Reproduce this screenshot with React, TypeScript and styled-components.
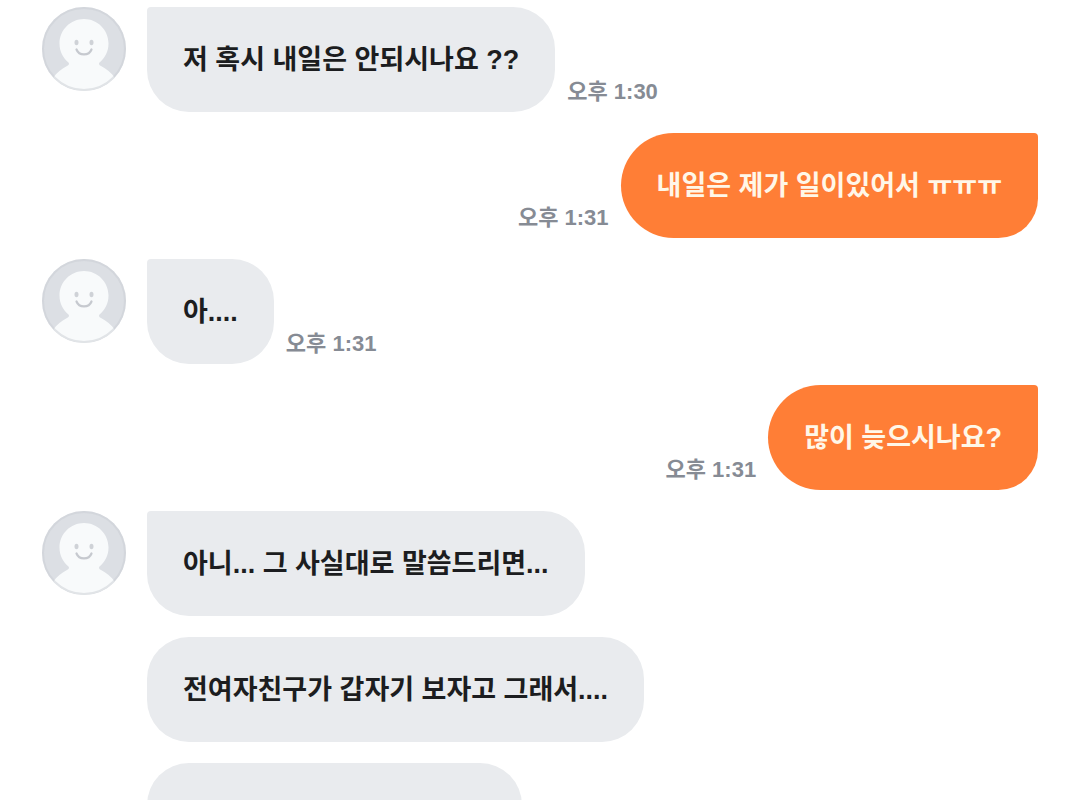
import React from "react";
import styled, { createGlobalStyle, css } from "styled-components";

const GlobalStyle = createGlobalStyle`
  *, *::before, *::after {
    box-sizing: border-box;
  }
  html {
    scrollbar-width: none;
  }
  body {
    margin: 0;
    background: #ffffff;
    font-family: "Liberation Sans", "Noto Sans CJK KR", sans-serif;
  }
`;

type Side = "received" | "sent";

const Conversation = styled.main`
  min-height: 100vh;
  padding: 7px 42px 20px;
`;

const MessageList = styled.ol`
  display: flex;
  flex-direction: column;
  gap: 21px;
  margin: 0;
  padding: 0;
  list-style: none;
`;

const MessageRow = styled.li<{ $side: Side }>`
  display: flex;
  flex-direction: ${({ $side }) => ($side === "sent" ? "row-reverse" : "row")};
  align-items: flex-start;
`;

const AvatarSlot = styled.div`
  flex: none;
  width: 84px;
  margin-right: 21px;
`;

const AvatarImage = styled.svg`
  display: block;
  width: 84px;
  height: 84px;
`;

const receivedBubble = css<{ $first: boolean }>`
  border-radius: ${({ $first }) => ($first ? "4px" : "42px")} 42px 42px 42px;
  background: #e9ebee;
  color: #1c1d20;
`;

const sentBubble = css`
  border-radius: 53px 4px 40px 53px;
  background: #ff7e36;
  color: #fff7e8;
`;

const Bubble = styled.p<{ $side: Side; $first: boolean }>`
  margin: 0;
  padding: 33px 36px 32px;
  font-size: 27px;
  font-weight: 700;
  line-height: 40px;
  ${({ $side }) => ($side === "sent" ? sentBubble : receivedBubble)}
`;

const Time = styled.time`
  flex: none;
  align-self: flex-end;
  margin: 0 12px;
  padding-bottom: 4px;
  color: #868b94;
  font-size: 22px;
  font-weight: 700;
  line-height: 32px;
`;

function Avatar() {
  return (
    <AvatarImage viewBox="0 0 84 84" role="img" aria-label="프로필">
      <defs>
        <clipPath id="avatar-clip">
          <circle cx="42" cy="42" r="42" />
        </clipPath>
      </defs>
      <g clipPath="url(#avatar-clip)">
        <rect width="84" height="84" fill="#dcdfe4" />
        <path
          d="M42 12C55.500 12 66.500 23 66.500 36.500C66.500 44.500 63 51 57.500 55.500C56.500 57 57 58 59 59C64 61.500 69.500 65.500 73 71L73 90H11L11 71C14.500 65.500 20 61.500 25 59C27 58 27.500 57 26.500 55.500C21 51 17.500 44.500 17.500 36.500C17.500 23 28.500 12 42 12Z"
          fill="#f8fafb"
        />
      </g>
      <circle cx="42" cy="42" r="41" fill="none" stroke="#c9cdd4" strokeOpacity="0.5" strokeWidth="2" />
      <ellipse cx="34.500" cy="35.500" rx="2" ry="2.800" fill="#cfd2d7" />
      <ellipse cx="49.500" cy="35.500" rx="2" ry="2.800" fill="#cfd2d7" />
      <path d="M34.500 42.500C37 49 47 49 49.500 42.500" fill="none" stroke="#c6c9cf" strokeWidth="2.200" strokeLinecap="round" />
    </AvatarImage>
  );
}

interface Message {
  side: Side;
  text: string;
  first?: boolean;
  time?: string;
  dateTime?: string;
}

const messages: Message[] = [
  { side: "received", first: true, text: "저 혹시 내일은 안되시나요 ??", time: "오후 1:30", dateTime: "13:30" },
  { side: "sent", first: true, text: "내일은 제가 일이있어서 ㅠㅠㅠ", time: "오후 1:31", dateTime: "13:31" },
  { side: "received", first: true, text: "아....", time: "오후 1:31", dateTime: "13:31" },
  { side: "sent", first: true, text: "많이 늦으시나요?", time: "오후 1:31", dateTime: "13:31" },
  { side: "received", first: true, text: "아니... 그 사실대로 말씀드리면..." },
  { side: "received", text: "전여자친구가 갑자기 보자고 그래서...." },
  { side: "received", text: "이번에 만나야 될거같아서.." },
];

export default function App() {
  return (
    <>
      <GlobalStyle />
      <Conversation>
        <MessageList>
          {messages.map(({ side, text, first = false, time, dateTime }, index) => (
            <MessageRow key={index} $side={side}>
              {side === "received" && <AvatarSlot>{first && <Avatar />}</AvatarSlot>}
              <Bubble $side={side} $first={first}>
                {text}
              </Bubble>
              {time && <Time dateTime={dateTime}>{time}</Time>}
            </MessageRow>
          ))}
        </MessageList>
      </Conversation>
    </>
  );
}
